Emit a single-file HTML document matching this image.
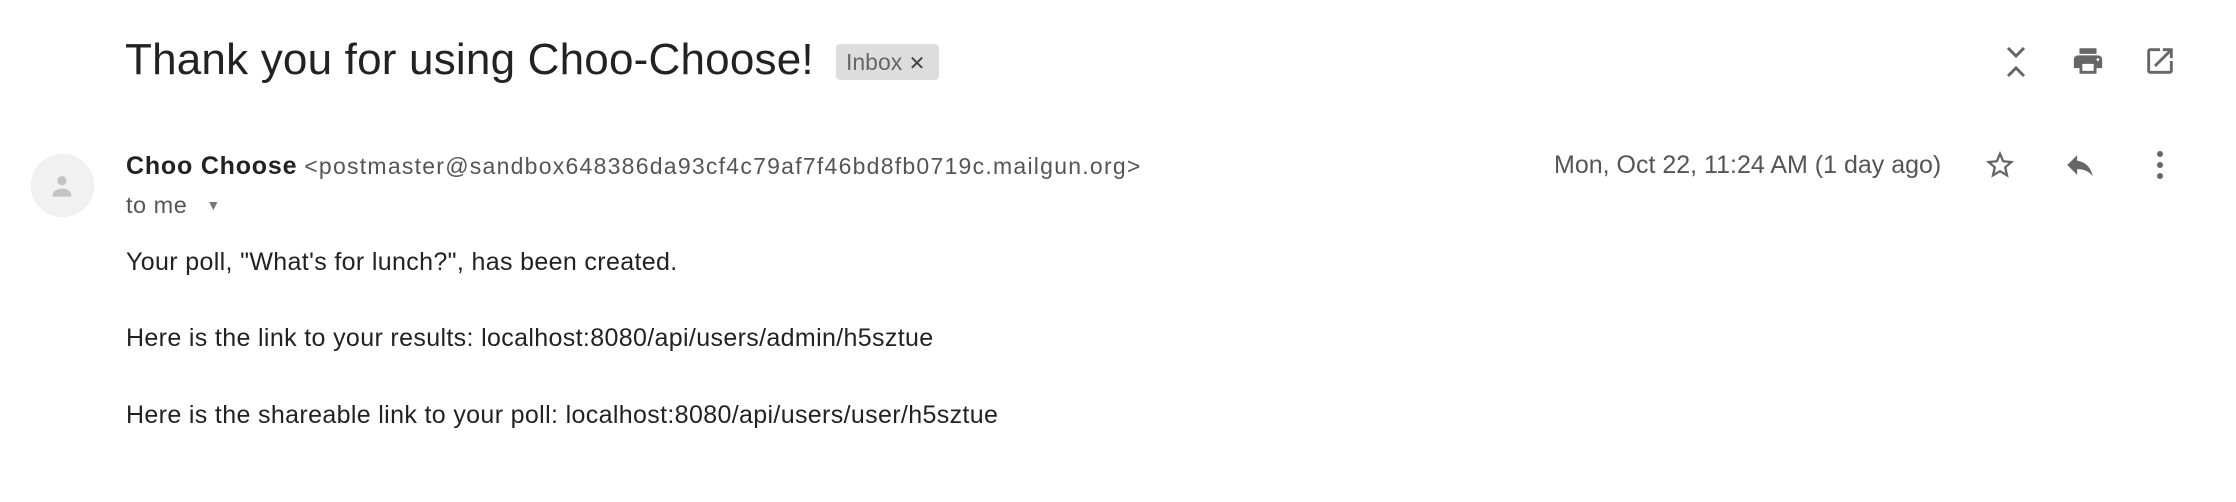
<!DOCTYPE html>
<html><head><meta charset="utf-8"><style>
body{margin:0;width:2236px;height:502px;background:#fff;position:relative;overflow:hidden;font-family:"Liberation Sans",Arial,sans-serif}
.a{position:absolute;white-space:nowrap}
</style></head><body>
<div class="a" style="left:125px;top:34px;font-size:44px;color:#222;line-height:52px;letter-spacing:0.2px">Thank you for using Choo-Choose!</div>
<div class="a" style="left:836px;top:44px;width:103px;height:36px;background:#ddd;border-radius:4px;font-size:23px;line-height:36px;color:#666;text-indent:10px">Inbox <span style="font-size:20px;color:#444">✕</span></div>

<svg class="a" style="left:2000px;top:44px" width="32" height="36" viewBox="0 0 32 36"><path d="M8 4l8 8 8-8M8 32l8-8 8 8" fill="none" stroke="#666" stroke-width="3"/></svg>
<svg class="a" style="left:2071px;top:44px" width="34" height="34" viewBox="0 0 24 24"><path fill="#666" d="M19 8H5c-1.66 0-3 1.34-3 3v6h4v4h12v-4h4v-6c0-1.660-1.34-3-3-3zm-3 11H8v-5h8v5zm3-7c-.55 0-1-.45-1-1s.45-1 1-1 1 .45 1 1-.45 1-1 1zm-1-9H6v4h12V3z"/></svg>
<svg class="a" style="left:2143px;top:44px" width="34" height="34" viewBox="0 0 24 24"><path fill="#666" d="M19 19H5V5h7V3H5c-1.11 0-2 .9-2 2v14c0 1.1.89 2 2 2h14c1.1 0 2-.9 2-2v-7h-2v7zM14 3v2h3.59l-9.83 9.830 1.41 1.41L19 6.41V10h2V3h-7z"/></svg>

<div class="a" style="left:31px;top:154px;width:63px;height:63px;border-radius:50%;background:#f1f1f1;border:1px solid #eee;box-sizing:border-box"></div>
<svg class="a" style="left:46px;top:170px" width="32" height="32" viewBox="0 0 24 24"><circle cx="12" cy="8" r="3.5" fill="#c4c4c4"/><path d="M5 19c0-3.5 4-5 7-5s7 1.5 7 5v1H5z" fill="#c4c4c4"/></svg>

<div class="a" style="left:126px;top:151px;font-size:25px;line-height:30px;color:#222"><b style="letter-spacing:0.8px">Choo Choose</b> <span style="color:#555;font-size:23px;letter-spacing:1.25px">&lt;postmaster@sandbox648386da93cf4c79af7f46bd8fb0719c.mailgun.org&gt;</span></div>
<div class="a" style="left:126px;top:191px;font-size:23.5px;line-height:28px;color:#555;letter-spacing:0.5px">to me <span style="font-size:14px;color:#777;vertical-align:3px;margin-left:12px">▼</span></div>

<div class="a" style="left:1554px;top:151px;font-size:25px;line-height:28px;color:#555">Mon, Oct 22, 11:24 AM (1 day ago)</div>
<svg class="a" style="left:1983px;top:148px" width="34" height="34" viewBox="0 0 24 24"><path fill="#666" d="M22 9.24l-7.19-.62L12 2 9.19 8.63 2 9.24l5.46 4.73L5.820 21 12 17.27 18.18 21l-1.63-7.03L22 9.24zM12 15.4l-3.76 2.27 1-4.28-3.32-2.88 4.38-.38L12 6.1l1.71 4.04 4.38.38-3.32 2.88 1 4.28L12 15.4z"/></svg>
<svg class="a" style="left:2063px;top:148px" width="34" height="34" viewBox="0 0 24 24"><path fill="#666" d="M10 9V5l-7 7 7 7v-4.1c5 0 8.5 1.6 11 5.1-1-5-4-10-11-11z"/></svg>
<svg class="a" style="left:2148px;top:150px" width="24" height="30" viewBox="0 0 24 30"><circle cx="12" cy="4" r="3" fill="#666"/><circle cx="12" cy="15" r="3" fill="#666"/><circle cx="12" cy="26" r="3" fill="#666"/></svg>

<div class="a" style="left:126px;top:248px;font-size:25px;line-height:28px;color:#222;letter-spacing:0.35px">Your poll, "What's for lunch?", has been created.</div>
<div class="a" style="left:126px;top:324px;font-size:25px;line-height:28px;color:#222;letter-spacing:0.35px">Here is the link to your results: localhost:8080/api/users/admin/h5sztue</div>
<div class="a" style="left:126px;top:401px;font-size:25px;line-height:28px;color:#222;letter-spacing:0.35px">Here is the shareable link to your poll: localhost:8080/api/users/user/h5sztue</div>
</body></html>
